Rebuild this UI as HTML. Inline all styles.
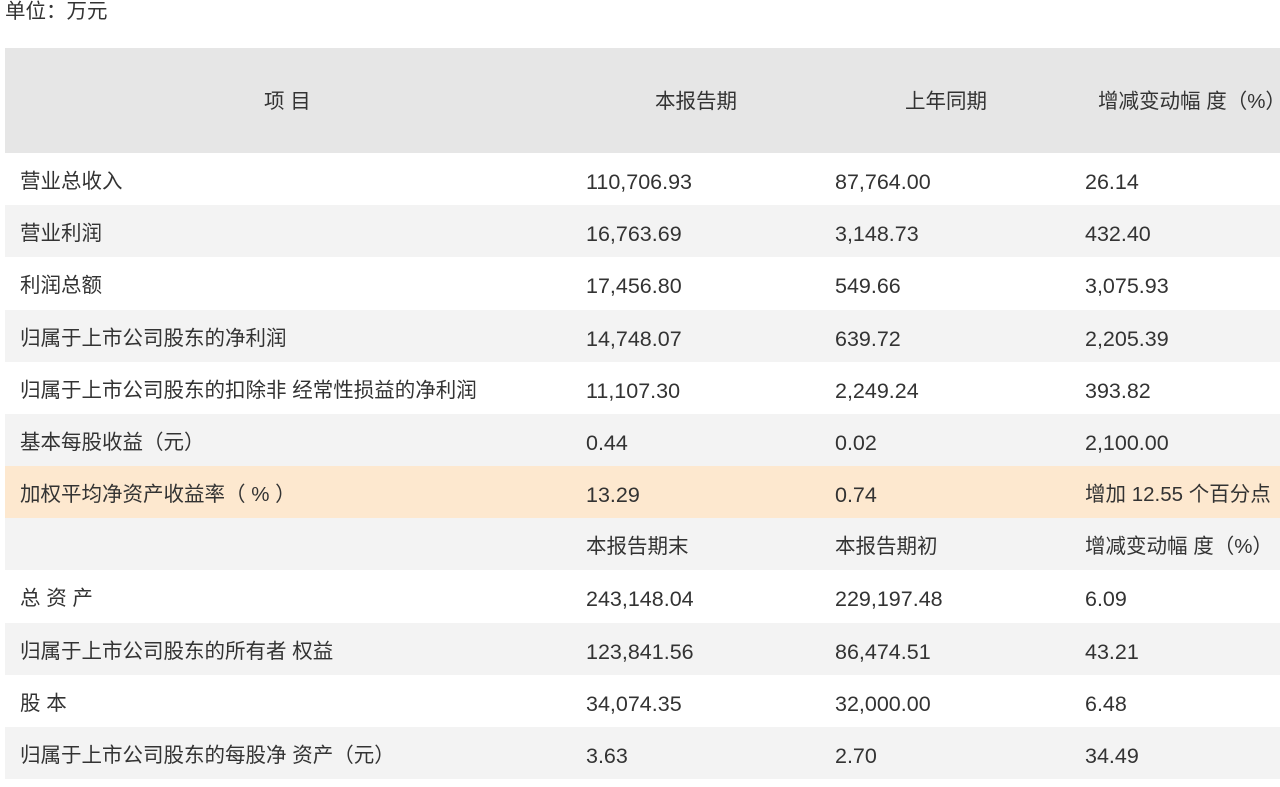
<!DOCTYPE html>
<html><head><meta charset="utf-8"><style>
body{margin:0;background:#fff;font-family:"Liberation Sans","Noto Sans CJK SC",sans-serif;color:#333;font-size:20.5px;width:1280px;height:787px;overflow:hidden;position:relative}
.u{position:absolute;left:5px;top:0;line-height:24px}
.r{position:absolute;left:5px;width:1275px;height:52px;line-height:58px}
.r span{position:absolute;white-space:nowrap}
.c1{left:15px}.c2,.c3{font-size:21.5px}.c2{left:581px}.c3{left:830px}.c4{left:1080px}
.n{font-size:21.5px}
.g{background:#f3f3f3}.o{background:#fde8cf}
.h{background:#e6e6e6;height:105px;line-height:108px;top:48px}
</style></head><body>
<div class="u">单位：万元</div>
<div class="r h"><span style="left:259px">项 目</span><span style="left:650px">本报告期</span><span style="left:900px">上年同期</span><span style="left:1093px">增减变动幅 度（%）</span></div>
<div class="r" style="top:153px"><span class="c1">营业总收入</span><span class="c2">110,706.93</span><span class="c3">87,764.00</span><span class="c4 n">26.14</span></div>
<div class="r g" style="top:205px"><span class="c1">营业利润</span><span class="c2">16,763.69</span><span class="c3">3,148.73</span><span class="c4 n">432.40</span></div>
<div class="r" style="top:257px"><span class="c1">利润总额</span><span class="c2">17,456.80</span><span class="c3">549.66</span><span class="c4 n">3,075.93</span></div>
<div class="r g" style="top:310px"><span class="c1">归属于上市公司股东的净利润</span><span class="c2">14,748.07</span><span class="c3">639.72</span><span class="c4 n">2,205.39</span></div>
<div class="r" style="top:362px"><span class="c1">归属于上市公司股东的扣除非 经常性损益的净利润</span><span class="c2">11,107.30</span><span class="c3">2,249.24</span><span class="c4 n">393.82</span></div>
<div class="r g" style="top:414px"><span class="c1">基本每股收益（元）</span><span class="c2">0.44</span><span class="c3">0.02</span><span class="c4 n">2,100.00</span></div>
<div class="r o" style="top:466px"><span class="c1">加权平均净资产收益率（ % ）</span><span class="c2">13.29</span><span class="c3">0.74</span><span class="c4">增加 12.55 个百分点</span></div>
<div class="r g" style="top:518px"><span class="c2" style="font-size:20.5px">本报告期末</span><span class="c3" style="font-size:20.5px">本报告期初</span><span class="c4">增减变动幅 度（%）</span></div>
<div class="r" style="top:570px"><span class="c1">总 资 产</span><span class="c2">243,148.04</span><span class="c3">229,197.48</span><span class="c4 n">6.09</span></div>
<div class="r g" style="top:623px"><span class="c1">归属于上市公司股东的所有者 权益</span><span class="c2">123,841.56</span><span class="c3">86,474.51</span><span class="c4 n">43.21</span></div>
<div class="r" style="top:675px"><span class="c1">股 本</span><span class="c2">34,074.35</span><span class="c3">32,000.00</span><span class="c4 n">6.48</span></div>
<div class="r g" style="top:727px"><span class="c1">归属于上市公司股东的每股净 资产（元）</span><span class="c2">3.63</span><span class="c3">2.70</span><span class="c4 n">34.49</span></div>
</body></html>
